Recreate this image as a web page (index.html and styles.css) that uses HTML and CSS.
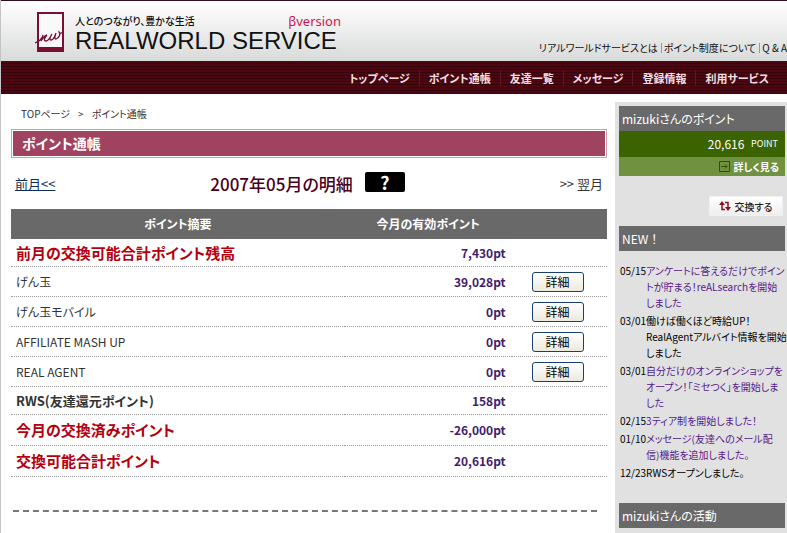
FILE: index.html
```html
<!DOCTYPE html>
<html lang="ja">
<head>
    <meta charset="UTF-8">
    <meta name="viewport" content="width=device-width, initial-scale=1.0">
    <title>ポイント通帳 - REALWORLD SERVICE</title>
    <link rel="stylesheet" href="styles.css">
</head>
<body>
    <header class="header">
        <div class="logo">
            <svg class="logo-mark" width="30" height="40" viewBox="0 0 30 40" aria-hidden="true">
                <rect x="3" y="1" width="25" height="38" fill="#f8f9f8" stroke="#7a0f36" stroke-width="2"/>
                <rect x="2" y="35" width="27" height="5" fill="#7a0f36"/>
                <path d="M0 31L4 29C6 27 8 24 8 23L6 29C8 26 10 23 12 23M12 23C10 25 8 29 11 29C13 29 16 24 17 22C15 25 14 28 16 28C18 28 20 24 21 21C20 24 19 27 21 27C24 26 26 22 24 20C24 21 26 22 28 20" fill="none" stroke="#7a0f36" stroke-width="1.3"/>
            </svg>
            <div class="logo-text">
                <div class="logo-top">
                    <span class="tagline">人とのつながり、豊かな生活</span>
                    <span class="version">βversion</span>
                </div>
                <div class="logo-name">REALWORLD SERVICE</div>
            </div>
        </div>
        <div class="sub-nav">
            <a href="#">リアルワールドサービスとは</a>
            <a href="#">ポイント制度について</a>
            <a href="#">Q &amp; A</a>
        </div>
    </header>

    <nav class="nav">
        <a href="#">トップページ</a>
        <a href="#">ポイント通帳</a>
        <a href="#">友達一覧</a>
        <a href="#">メッセージ</a>
        <a href="#">登録情報</a>
        <a href="#">利用サービス</a>
    </nav>

    <div class="container">
        <main class="main">
            <div class="breadcrumb"><a href="#">TOPページ</a><span>&gt;</span><span>ポイント通帳</span></div>
            <h1 class="page-title">ポイント通帳</h1>

            <div class="month">
                <a class="prev" href="#">前月&lt;&lt;</a>
                <div class="month-name">
                    <h2>2007年05月の明細</h2>
                    <button class="help" type="button">?</button>
                </div>
                <span class="next">&gt;&gt; 翌月</span>
            </div>

            <table class="points">
                <thead>
                    <tr><th class="col-name">ポイント摘要</th><th class="col-point">今月の有効ポイント</th><th></th></tr>
                </thead>
                <tbody>
                    <tr class="total"><td>前月の交換可能合計ポイント残高</td><td class="pt">7,430pt</td><td></td></tr>
                    <tr class="item"><td>げん玉</td><td class="pt">39,028pt</td><td><button class="detail" type="button">詳細</button></td></tr>
                    <tr class="item"><td>げん玉モバイル</td><td class="pt">0pt</td><td><button class="detail" type="button">詳細</button></td></tr>
                    <tr class="item"><td>AFFILIATE MASH UP</td><td class="pt">0pt</td><td><button class="detail" type="button">詳細</button></td></tr>
                    <tr class="item"><td>REAL AGENT</td><td class="pt">0pt</td><td><button class="detail" type="button">詳細</button></td></tr>
                    <tr class="rws"><td>RWS(友達還元ポイント)</td><td class="pt">158pt</td><td></td></tr>
                    <tr class="total tall"><td>今月の交換済みポイント</td><td class="pt">-26,000pt</td><td></td></tr>
                    <tr class="total tall"><td>交換可能合計ポイント</td><td class="pt">20,616pt</td><td></td></tr>
                </tbody>
            </table>
            <hr class="line">
        </main>

        <aside class="side">
            <h3>mizukiさんのポイント</h3>
            <div class="my-point">20,616 <small>POINT</small></div>
            <a class="more" href="#">
                <svg width="11" height="11" viewBox="0 0 11 11" aria-hidden="true">
                    <path d="M.5.5h10v10H.5zM2 5.500h6M6 3.500l2 2-2 2" fill="none" stroke="#2f5000"/>
                </svg>
                詳しく見る
            </a>
            <button class="exchange" type="button">
                <svg width="12" height="10" viewBox="0 0 12 10" aria-hidden="true">
                    <path d="M3 2v6.500h3M6 1.500h3v6" fill="none" stroke="#8c1020" stroke-width="1.500"/>
                    <path d="M3 0l3 4H0zM9 10l3-4H6z" fill="#8c1020"/>
                </svg>
                交換する
            </button>
            <h3 class="new">NEW！</h3>
            <dl class="news">
                <dt>05/15</dt><dd><a href="#">アンケートに答えるだけでポイン<br>トが貯まる！reALsearchを開始<br>しました</a></dd>
                <dt>03/01</dt><dd>働けば働くほど時給UP！<br>RealAgentアルバイト情報を開始<br>しました</dd>
                <dt>03/01</dt><dd><a href="#">自分だけのオンラインショップを<br>オープン！「ミセつく」を開始しま<br>した</a></dd>
                <dt>02/15</dt><dd><a href="#">3ティア制を開始しました！</a></dd>
                <dt>01/10</dt><dd><a href="#">メッセージ(友達へのメール配<br>信)機能を追加しました。</a></dd>
                <dt>12/23</dt><dd>RWSオープンしました。</dd>
            </dl>
            <h3>mizukiさんの活動</h3>
        </aside>
    </div>
</body>
</html>
```
FILE: styles.css
```css
* {
    box-sizing: border-box;
}
body {
    margin: 0;
    border-left: 1px solid #c4c4c4;
    background: #fff;
    color: #333;
    font-family: "Noto Sans CJK JP", sans-serif;
    font-size: 12px;
    font-feature-settings: "palt";
    overflow-x: hidden;
}
a {
    color: inherit;
    text-decoration: none;
}
h1, h2, h3 {
    margin: 0;
}
button {
    font-family: inherit;
    font-feature-settings: inherit;
    padding: 0;
}

/* header */
.header {
    display: flex;
    justify-content: space-between;
    align-items: flex-end;
    height: 61px;
    border-top: 1px solid #3a0a20;
    background: linear-gradient(#fff, #d9dbda);
    white-space: nowrap;
}
.logo {
    display: flex;
    gap: 10px;
    padding: 0 0 9px 34px;
}
.logo-mark {
    display: block;
}
.logo-text {
    width: 266px;
}
.logo-top {
    display: flex;
    justify-content: space-between;
    align-items: center;
    height: 18px;
    line-height: 16px;
    color: #111;
}
.tagline {
    font-size: 10px;
    font-weight: 500;
}
.version {
    color: #d0144f;
    font-family: "Noto Sans", sans-serif;
    font-size: 13px;
}
.logo-name {
    color: #111;
    font-family: "Liberation Sans", sans-serif;
    font-size: 24px;
    line-height: 22px;
}
.sub-nav {
    display: flex;
    padding-bottom: 5px;
    color: #111;
    font-size: 10px;
    line-height: 16px;
}
.sub-nav a + a {
    margin-left: 3px;
    padding-left: 3px;
    background: linear-gradient(#999, #999) 0 3px / 1px 10px no-repeat;
}

/* global menu */
.nav {
    display: flex;
    justify-content: flex-end;
    align-items: center;
    height: 33px;
    padding-right: 9px;
    background: repeating-linear-gradient(#4c0712 0, #4c0712 2px, #35040b 2px, #35040b 3px);
    color: #f3dfe2;
    font-size: 11px;
    font-weight: bold;
    line-height: 16px;
}
.nav a {
    padding: 0 9px;
}
.nav a + a {
    border-left: 1px solid #5c1a25;
}

.container {
    display: flex;
    gap: 8px;
    padding-top: 8px;
}
.main {
    flex: 1;
    padding-left: 10px;
}
.breadcrumb {
    display: flex;
    gap: 8px;
    padding: 4px 10px 7px;
    font-size: 10px;
    line-height: 16px;
}
.page-title {
    height: 29px;
    padding-left: 10px;
    border: 1px solid #cf9db0;
    box-shadow: inset 0 0 0 1px #fff;
    background: #a04360;
    color: #fff;
    font-size: 14px;
    line-height: 27px;
}
.month {
    display: flex;
    justify-content: space-between;
    align-items: center;
    height: 51px;
    padding: 0 4px;
    font-size: 13px;
}
.month-name {
    display: flex;
    gap: 12px;
    align-items: center;
}
.month h2 {
    color: #4a0020;
    font-size: 17px;
    font-weight: 500;
    line-height: 24px;
}
.prev {
    color: #0a2d5a;
    text-decoration: underline;
}
.help {
    width: 40px;
    height: 20px;
    margin-bottom: 4px;
    border: 0;
    border-radius: 2px;
    background: #000;
    color: #fff;
    font-size: 18px;
    font-weight: bold;
    line-height: 20px;
}

/* point table */
.points {
    width: 100%;
    border-spacing: 0;
    line-height: 20px;
}
.points th {
    height: 30px;
    padding: 0;
    background: #696969;
    color: #fff;
}
.col-name {
    width: 56%;
}
.col-point {
    width: 28%;
}
.points td {
    height: 30px;
    padding: 0 0 0 5px;
    border-bottom: 1px dotted #999;
}
.points .total td:first-child {
    color: #b4000f;
    font-size: 15px;
    font-weight: bold;
}
.points .total td, .points .rws td {
    height: 28px;
}
.points .tall td {
    height: 31px;
}
.rws {
    font-weight: bold;
}
.points .rws td:first-child {
    font-size: 13px;
}
.points .pt {
    padding-right: 6px;
    color: #421c6e;
    font-weight: bold;
    text-align: right;
}
.detail {
    display: block;
    width: 52px;
    height: 20px;
    margin-left: 15px;
    border: 1px solid #17406d;
    border-radius: 3px;
    background: linear-gradient(#fff, #ece9dd);
    color: #000;
    font-size: 12px;
    line-height: 18px;
}
.line {
    margin: 33px 10px 0 2px;
    border: 0;
    border-top: 2px dashed #777;
}

/* side column */
.side {
    width: 172px;
    padding: 4px 2px 8px 4px;
    background: #e1e1e1;
    color: #000;
    white-space: nowrap;
}
.side h3 {
    height: 25px;
    padding-left: 3px;
    background: #696969;
    color: #fff;
    font-size: 12px;
    font-weight: normal;
    line-height: 25px;
}
.side .new {
    font-feature-settings: normal;
}
.my-point {
    height: 26px;
    padding-right: 7px;
    background: #3b6300;
    color: #fff;
    line-height: 26px;
    text-align: right;
}
.my-point small {
    margin-left: 4px;
    font-size: 9px;
    vertical-align: 2px;
}
.more {
    display: flex;
    justify-content: flex-end;
    align-items: center;
    gap: 4px;
    height: 19px;
    padding-right: 6px;
    background: #6f9140;
    color: #fff;
    font-size: 10px;
    font-weight: bold;
}
.exchange {
    display: flex;
    justify-content: center;
    align-items: center;
    gap: 3px;
    width: 74px;
    height: 20px;
    margin: 20px 2px 10px auto;
    border: 1px solid #f0f0f0;
    background: linear-gradient(#fff, #eee);
    color: #222;
    font-size: 10px;
    font-weight: 500;
}
.news {
    display: grid;
    grid-template-columns: 26px 1fr;
    row-gap: 2px;
    margin: 12px 0 22px;
    padding-left: 1px;
    font-size: 10px;
    line-height: 16px;
}
.news dd {
    margin: 0;
}
.news a {
    color: #551a8b;
}
```
